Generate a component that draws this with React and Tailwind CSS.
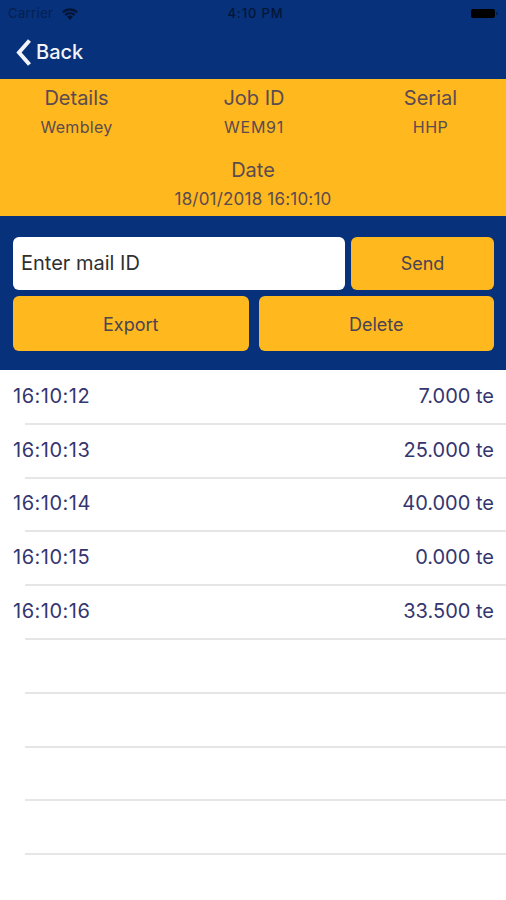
import React, { useState } from 'react';

const readings = [
  { time: '16:10:12', load: '7.000 te' },
  { time: '16:10:13', load: '25.000 te' },
  { time: '16:10:14', load: '40.000 te' },
  { time: '16:10:15', load: '0.000 te' },
  { time: '16:10:16', load: '33.500 te' },
];

// The table keeps drawing separators below the last reading
const EMPTY_ROWS = 4;

const StatusBar = () => (
  <div className="grid h-[27px] grid-cols-3 items-center pr-[8px] pl-[8px] text-[13px] text-[#041638]">
    <div className="flex items-center gap-[9px]">
      <span className="tracking-[0.4px] text-[#05204f]">Carrier</span>
      <svg className="h-[12px] w-[16px]" viewBox="0 0 16 12" fill="currentColor">
        <path d="M0 3.6C4.6-.9 11.400-.9 16 3.600L14.400 5.300C10.700 1.800 5.300 1.800 1.600 5.300Z" />
        <path d="M2.500 6.200C5.700 3.200 10.300 3.200 13.500 6.200L11.900 7.900C9.600 5.800 6.400 5.800 4.100 7.900Z" />
        <path d="M5 8.800C6.800 7.200 9.200 7.200 11 8.800L8 12Z" />
      </svg>
    </div>
    <span className="pl-[5px] text-center font-medium tracking-[0.9px]">4:10 PM</span>
    <div className="flex items-center justify-end gap-px">
      <span className="h-[9px] w-[24px] rounded-[2px] bg-black" />
      <span className="h-[3px] w-[2px] rounded-r bg-[#041f4e]" />
    </div>
  </div>
);

const Field = ({ label, value, valueClass }) => (
  <div className="flex flex-col items-center">
    <span className="text-[20px] leading-[30px]">{label}</span>
    <span className={`leading-[29px] ${valueClass}`}>{value}</span>
  </div>
);

const ActionButton = ({ children, className = '' }) => (
  <button
    type="button"
    className={`flex items-center justify-center rounded-[6px] bg-[#ffb81e] text-[18px] text-[#4a4354] ${className}`}
  >
    {children}
  </button>
);

const App = () => {
  const [mail, setMail] = useState('');

  return (
    <div className="flex h-[900px] w-[506px] flex-col overflow-hidden bg-white font-['Inter',sans-serif]">
      <header className="h-[79px] shrink-0 bg-[#07317a]">
        <StatusBar />
        <button type="button" className="flex h-[50px] items-center gap-[5px] pl-[16px] text-[#f3f4fa]">
          <svg className="h-[27px] w-[15px]" viewBox="0 0 15 27" fill="none" stroke="currentColor" strokeWidth="4">
            <path d="M13.500 1.500L3 13.500L13.500 25.500" />
          </svg>
          <span className="text-[20px] font-medium">Back</span>
        </button>
      </header>

      <section className="h-[137px] shrink-0 bg-[#ffb81e] pt-[4px] text-[#5a4b50]">
        <div className="grid grid-cols-[153px_1fr_151px]">
          <Field label="Details" value="Wembley" valueClass="text-[16px] tracking-[0.3px]" />
          <Field label="Job ID" value="WEM91" valueClass="text-[16px] tracking-[0.7px]" />
          <Field label="Serial" value="HHP" valueClass="text-[16px] tracking-[0.5px]" />
        </div>
        <div className="pt-[13px]">
          <Field label="Date" value="18/01/2018 16:10:10" valueClass="text-[17px] tracking-[0.2px]" />
        </div>
      </section>

      <section className="flex h-[154px] shrink-0 flex-col gap-[6px] bg-[#07317a] pt-[21px] pr-[12px] pl-[13px]">
        <div className="flex h-[53px] gap-[6px]">
          <input
            type="text"
            value={mail}
            onChange={(e) => setMail(e.target.value)}
            placeholder="Enter mail ID"
            className="min-w-0 flex-1 rounded-[6px] bg-white px-[8px] pb-[2px] text-[20px] text-[#303030] placeholder:text-[#303030]"
          />
          <ActionButton className="w-[143px]">Send</ActionButton>
        </div>
        <div className="grid h-[55px] grid-cols-2 gap-[10px]">
          <ActionButton className="pt-[2px]">Export</ActionButton>
          <ActionButton className="pt-[2px]">Delete</ActionButton>
        </div>
      </section>

      <ul className="flex-1 pt-px text-[20px] text-[#34366f]">
        {readings.map((reading) => (
          <li key={reading.time} className="flex h-[53.8px] flex-col">
            <div className="flex flex-1 items-center justify-between pr-[12px] pb-[2px] pl-[13px]">
              <span className="tracking-[0.5px]">{reading.time}</span>
              <span>{reading.load}</span>
            </div>
            <div className="ml-[25px] h-[2px] bg-[#e6e6e6]" />
          </li>
        ))}
        {Array.from({ length: EMPTY_ROWS }, (_, i) => (
          <li key={i} className="flex h-[53.8px] flex-col justify-end">
            <div className="ml-[25px] h-[2px] bg-[#e6e6e6]" />
          </li>
        ))}
      </ul>
    </div>
  );
};

export default App;
